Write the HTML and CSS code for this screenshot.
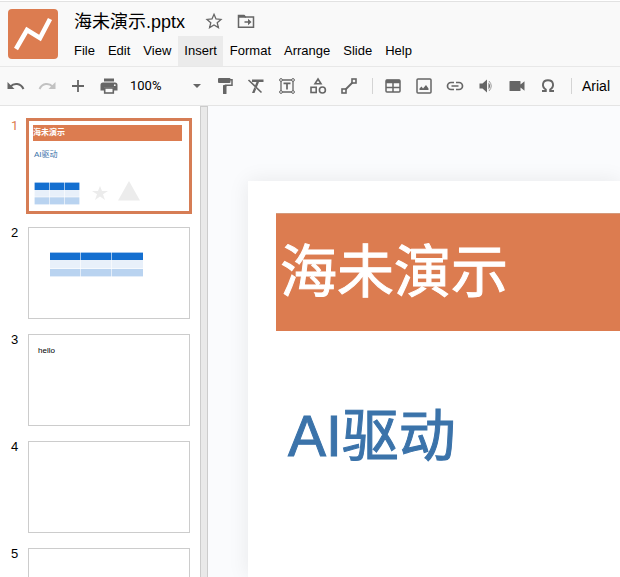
FILE: index.html
```html
<!DOCTYPE html>
<html lang="en">
<head>
<meta charset="utf-8">
<title>海未演示.pptx</title>
<link rel="stylesheet" href="styles.css">
</head>
<body>
<header class="header">
  <svg class="logo" viewBox="0 0 50 50" aria-hidden="true"><rect width="50" height="50" rx="4" fill="#dc7c50"/><path d="M8 40L19 21L32 29L42 10" fill="none" stroke="#fff" stroke-width="4.6"/></svg>
  <div class="header-main">
    <div class="title-row">
      <input class="doc-title" type="text" aria-label="Document name" value="海未演示.pptx">
      <button class="title-button" aria-label="Star"><svg width="18" height="18" viewBox="0 0 18 18"><path d="M9 2.3L11 6.9L16 7.4L12.2 10.7L13.4 15.6L9 13L4.600 15.600L5.800 10.700L2 7.400L7 6.900Z" fill="none" stroke="#666" stroke-width="1.300"/></svg></button>
      <button class="title-button" aria-label="Move"><svg width="18" height="18" viewBox="0 0 18 18"><path d="M1.500 3.500H7L8.500 5H16.500V15.200H1.500Z" fill="none" stroke="#666" stroke-width="1.500"/><path d="M1 3H7.200L9 5.800H1Z" fill="#666"/><path d="M7.500 9.200H11V6.800L14.500 10L11 13.200V10.800H7.500Z" fill="#666"/></svg></button>
    </div>
    <nav class="menu">
      <button>File</button>
      <button>Edit</button>
      <button>View</button>
      <button class="open">Insert</button>
      <button>Format</button>
      <button>Arrange</button>
      <button>Slide</button>
      <button>Help</button>
    </nav>
  </div>
</header>
<div class="toolbar">
  <button class="tool" aria-label="Undo"><svg width="20" height="20" viewBox="0 0 20 20"><path d="M4.500 10.500C8 6.800 14.500 7 17.500 13" fill="none" stroke="#666" stroke-width="2"/><path d="M1.500 6V13H8.500Z" fill="#666"/></svg></button>
  <button class="tool" aria-label="Redo"><svg width="20" height="20" viewBox="0 0 20 20"><path d="M15.500 10.500C12 6.800 5.500 7 2.500 13" fill="none" stroke="#c2c2c2" stroke-width="2"/><path d="M18.500 6V13H11.500Z" fill="#c2c2c2"/></svg></button>
  <button class="tool" aria-label="New slide"><svg width="20" height="20" viewBox="0 0 20 20"><path d="M10 4V16M4 10H16" stroke="#666" stroke-width="1.800"/></svg></button>
  <button class="tool" aria-label="Print"><svg width="20" height="20" viewBox="0 0 20 20"><path d="M5 2.500H15V5.500H5ZM4 6.500H16Q18.500 6.500 18.500 9V14.500H15V11.500H5V14.500H1.500V9Q1.500 6.500 4 6.500Z" fill="#666"/><rect x="5.700" y="12" width="8.600" height="5" fill="#f9f9f9" stroke="#666" stroke-width="1.600"/><circle cx="15.800" cy="9.200" r=".9" fill="#f9f9f9"/></svg></button>
  <button class="zoom"><span>100%</span><svg width="8" height="4" viewBox="0 0 8 4"><path d="M0 0H8L4 4Z" fill="#666"/></svg></button>
  <button class="tool" aria-label="Paint format"><svg width="20" height="20" viewBox="0 0 20 20"><rect x="3" y="2" width="12.500" height="5" rx="1" fill="#666"/><path d="M15 3.800H17V9.200H10.500V11" fill="none" stroke="#666" stroke-width="1.500"/><rect x="8" y="9" width="3.500" height="9" rx=".6" fill="#666"/></svg></button>
  <button class="tool" aria-label="Clear formatting"><svg width="20" height="20" viewBox="0 0 20 20"><path d="M6 3.500H17.500V6H6ZM10.500 6H13L8.500 17H6Z" fill="#666"/><path d="M3.500 5.200L15.500 17.200" stroke="#f9f9f9" stroke-width="1.500"/><path d="M2.500 4L15.500 16.500" stroke="#666" stroke-width="1.600"/></svg></button>
  <button class="tool" aria-label="Text box"><svg width="20" height="20" viewBox="0 0 20 20" fill="none" stroke="#666"><path d="M4 4H16V16H4Z" stroke-width="1.300"/><path d="M6.500 7.300H13.500M10 7.300V13.500" stroke-width="1.700"/><g fill="#f9f9f9"><circle cx="4" cy="4" r="1.400"/><circle cx="16" cy="4" r="1.400"/><circle cx="4" cy="16" r="1.400"/><circle cx="16" cy="16" r="1.400"/></g></svg></button>
  <button class="tool" aria-label="Shape"><svg width="20" height="20" viewBox="0 0 20 20" fill="none" stroke="#666" stroke-width="1.600"><path d="M10 3L13 7.700H7Z"/><rect x="3" y="11.300" width="5.200" height="5.200"/><circle cx="14.400" cy="14" r="3"/></svg></button>
  <button class="tool" aria-label="Line"><svg width="20" height="20" viewBox="0 0 20 20" fill="none" stroke="#666" stroke-width="1.600"><path d="M6 14L14 6" stroke-width="1.800"/><rect x="3" y="13" width="4" height="4" fill="#f9f9f9"/><rect x="13" y="3" width="4" height="4" fill="#f9f9f9"/></svg></button>
  <span class="separator"></span>
  <button class="tool" aria-label="Table"><svg width="20" height="20" viewBox="0 0 20 20" fill="none" stroke="#666" stroke-width="1.500"><rect x="3" y="4" width="14" height="12" rx="1"/><path d="M3 11.500H17M10 6V16"/><path d="M3 5.500H17" stroke-width="3.500"/></svg></button>
  <button class="tool" aria-label="Image"><svg width="20" height="20" viewBox="0 0 20 20"><rect x="3" y="3" width="14" height="14" rx="1" fill="none" stroke="#666" stroke-width="1.500"/><path d="M5.500 14V12.500L7.500 10.500L9 12.500L12 9L14.500 12.500V14Z" fill="#666"/></svg></button>
  <button class="tool" aria-label="Link"><svg width="20" height="20" viewBox="0 0 20 20" fill="none" stroke="#666" stroke-width="1.700"><path d="M9 6.500H6A3.500 3.500 0 0 0 6 13.500H9M11 6.500H14A3.500 3.500 0 0 1 14 13.500H11M6.500 10H13.500"/></svg></button>
  <button class="tool" aria-label="Audio"><svg width="20" height="20" viewBox="0 0 20 20"><path d="M3.500 7.500H6.500L11 3.500V16.500L6.500 12.500H3.500Z" fill="#666"/><path d="M12.500 6.500Q15.500 10 12.500 13.500Z" fill="#666"/><path d="M13 5Q17.500 10 13 15" fill="none" stroke="#999" stroke-width="1"/></svg></button>
  <button class="tool" aria-label="Video"><svg width="20" height="20" viewBox="0 0 20 20"><path d="M2.500 5.500Q2.500 5 3 5H13Q13.500 5 13.500 5.500V8.500L17.500 5.200V14.800L13.500 11.500V14.500Q13.500 15 13 15H3Q2.500 15 2.500 14.500Z" fill="#666"/></svg></button>
  <button class="tool" aria-label="Special character"><svg width="20" height="20" viewBox="0 0 20 20"><path d="M4 15H7.800V13.500C3.500 11 4 4.300 10 4.300S16.500 11 12.200 13.500V15H16" fill="none" stroke="#666" stroke-width="1.900"/></svg></button>
  <span class="separator"></span>
  <button class="font">Arial</button>
</div>
<div class="workspace">
  <aside class="filmstrip">
    <div class="item selected">
      <span class="number">1</span>
      <button class="thumb thumb-cover" aria-label="Slide 1">
        <span class="mini-title">海未演示</span>
        <span class="mini-subtitle">AI驱动</span>
        <span class="mini-objects">
          <svg width="46" height="23" viewBox="0 0 46 23"><path d="M0 0H46V8H0Z" fill="#146fd0"/><path d="M0 8H46V15H0Z" fill="#e8f0fa"/><path d="M0 15H46V23H0Z" fill="#b9d3f0"/><path d="M15.500 0V23M30.500 0V23M0 15H46M.5 0V23M45.500 0V23M0 .5H46M0 22.500H46" stroke="#fff" stroke-opacity=".6" fill="none"/></svg>
          <svg width="16" height="16" viewBox="0 0 16 16"><path d="M8 1L10 6H16L11 9.300L13 15L8 11.500L3 15L5 9.300L0 6H6Z" fill="#ececec"/></svg>
          <svg width="24" height="20" viewBox="0 0 24 20"><path d="M12 0L23 19.500H1Z" fill="#ececec"/></svg>
        </span>
      </button>
    </div>
    <div class="item">
      <span class="number">2</span>
      <button class="thumb thumb-table" aria-label="Slide 2">
        <svg width="93" height="25" viewBox="0 0 93 25"><path d="M0 0H93V8H0Z" fill="#146fd0"/><path d="M0 8H93V17H0Z" fill="#e8f0fa"/><path d="M0 17H93V25H0Z" fill="#b9d3f0"/><path d="M30.500 0V25M61.500 0V25M0 16.500H93M0 .5H93M0 24.500H93" stroke="#fff" stroke-opacity=".6" fill="none"/></svg>
      </button>
    </div>
    <div class="item">
      <span class="number">3</span>
      <button class="thumb thumb-text" aria-label="Slide 3">hello</button>
    </div>
    <div class="item">
      <span class="number">4</span>
      <button class="thumb" aria-label="Slide 4"></button>
    </div>
    <div class="item">
      <span class="number">5</span>
      <button class="thumb" aria-label="Slide 5"></button>
    </div>
  </aside>
  <div class="splitter"></div>
  <main class="canvas">
    <section class="slide">
      <h1 class="slide-title">海未演示</h1>
      <p class="slide-subtitle">AI驱动</p>
    </section>
  </main>
</div>
</body>
</html>
```
FILE: styles.css
```css
* {
  box-sizing: border-box;
}

body {
  margin: 0;
  height: 100vh;
  display: flex;
  flex-direction: column;
  overflow: hidden;
  background: #fff;
  color: #000;
  font: 13px/16px "Liberation Sans", "Noto Sans CJK SC", sans-serif;
}

button,
input {
  margin: 0;
  padding: 0;
  border: 0;
  background: none;
  color: inherit;
  font: inherit;
}

svg {
  display: block;
  flex: none;
}

.header {
  display: flex;
  flex: none;
  gap: 10px;
  margin-top: 1px;
  padding-left: 8px;
  border-top: 1px solid #e2e2e2;
  border-bottom: 1px solid #e8e8e8;
  background: #f9f9f9;
}

.logo {
  width: 50px;
  height: 50px;
  margin-top: 7px;
}

.title-row {
  display: flex;
  align-items: center;
  height: 34px;
  padding: 2px 0 0 6px;
}

.doc-title {
  width: 124px;
  height: 28px;
  font-size: 18px;
}

.title-button {
  padding: 2px 7px 0;
}

.menu {
  display: flex;
  gap: 1px;
}

.menu button {
  height: 30px;
  padding: 0 6px;
}

.menu .open {
  background: #ebebeb;
}

.toolbar {
  display: flex;
  flex: none;
  align-items: center;
  height: 39px;
  border-bottom: 1px solid #e4e4e4;
  background: #f9f9f9;
}

.tool {
  display: flex;
  flex: none;
  align-items: center;
  justify-content: center;
  width: 31px;
  height: 30px;
}

.zoom {
  display: flex;
  flex: none;
  align-items: center;
  justify-content: space-between;
  width: 85px;
  padding: 0 8px 0 6px;
  font-family: Roboto, sans-serif;
}

.separator {
  flex: none;
  width: 1px;
  height: 16px;
  margin: 0 4px 0 8px;
  background: #d4d4d4;
}

.font {
  padding-left: 6px;
  font-size: 14px;
}

.workspace {
  display: flex;
  flex: 1;
  min-height: 0;
}

.filmstrip {
  display: flex;
  flex: none;
  flex-direction: column;
  gap: 15px;
  width: 200px;
  padding-top: 14px;
  overflow: hidden;
}

.item {
  display: flex;
  flex: none;
}

.number {
  width: 28px;
  padding-left: 11px;
  line-height: 12px;
}

.thumb {
  width: 162px;
  height: 92px;
  border: 1px solid #ccc;
  background: #fff;
  text-align: left;
}

.selected .number {
  color: #dc7c50;
  font-family: Roboto, sans-serif;
}

.selected .thumb {
  border-color: #d67d55;
  outline: 2px solid #d67d55;
}

.thumb-cover {
  display: flex;
  flex-direction: column;
  padding: 4px 7px 8px 4px;
  font-size: 8px;
}

.mini-title {
  align-self: stretch;
  background: #dc7c50;
  color: #fff;
  font-weight: bold;
}

.mini-subtitle {
  padding: 6px 1px;
  color: #3b73aa;
}

.mini-objects {
  display: flex;
  align-items: center;
  margin-top: 12px;
  padding-left: 1px;
}

.mini-objects svg + svg {
  margin-left: 12px;
}

.mini-objects svg + svg + svg {
  margin: 0 0 4px 9px;
}

.thumb-table {
  display: flex;
  align-items: flex-start;
  padding: 24px 0 0 21px;
}

.thumb-text {
  display: flex;
  padding: 8px 9px;
  font-size: 8px;
}

.splitter {
  flex: none;
  width: 8px;
  border: 1px solid #ccc;
  border-bottom: 0;
  background: #e9e9e9;
}

.canvas {
  display: flex;
  flex: 1;
  min-width: 0;
  padding: 75px 0 0 40px;
  overflow: hidden;
  background: #fafbfd;
}

.slide {
  flex: 1;
  min-width: 0;
  padding: 32px 0 0 28px;
  background: #fff;
  box-shadow: 0 0 20px rgba(0, 0, 0, 0.08);
}

.slide-title,
.slide-subtitle {
  margin: 0;
  font-size: 57px;
  font-weight: normal;
  -webkit-text-stroke: 1px currentColor;
}

.slide-title {
  padding: 0 4px;
  border-top: 1px solid #d49a7c;
  background: #dc7c50;
  color: #fff;
  line-height: 117px;
}

.slide-subtitle {
  margin-top: 56px;
  padding-left: 12px;
  color: #3b73aa;
  line-height: 98px;
}
```
